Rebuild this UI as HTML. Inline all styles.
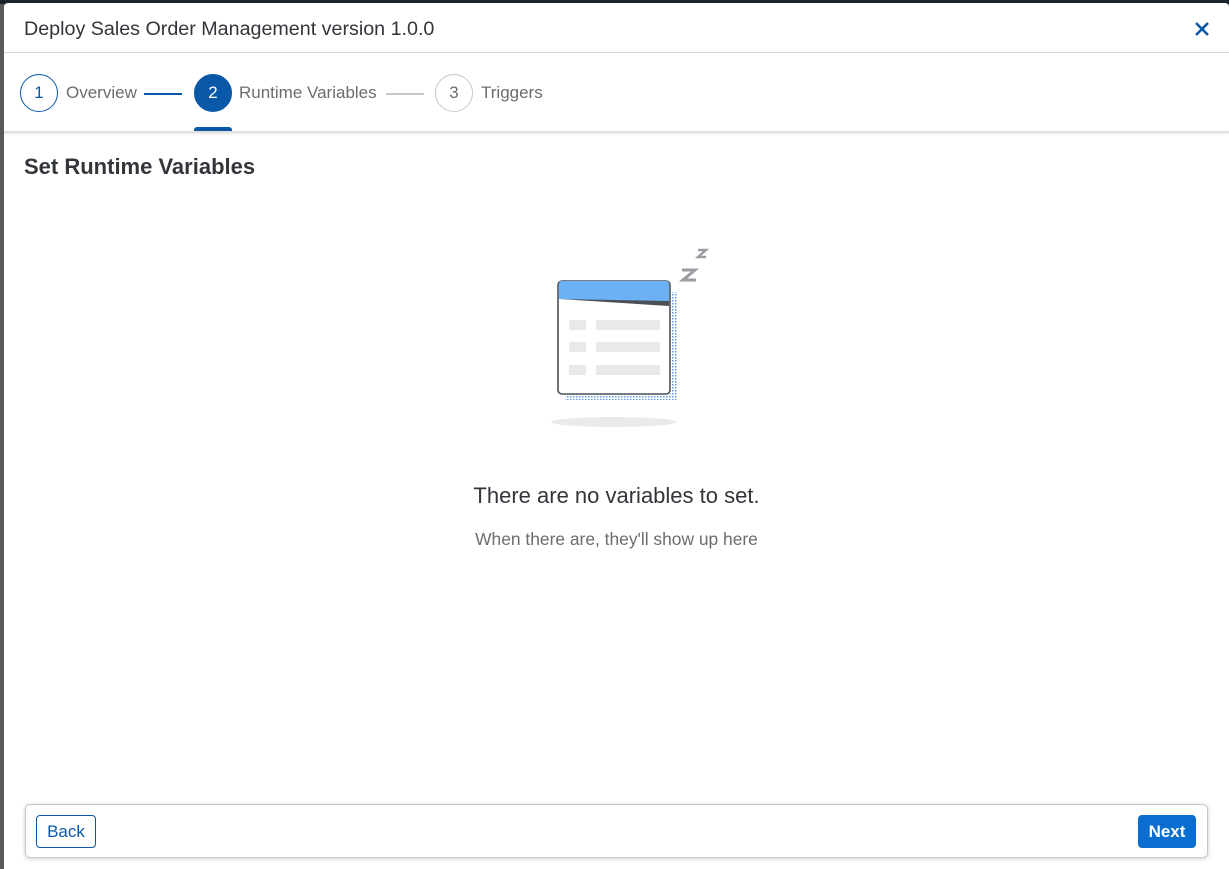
<!DOCTYPE html>
<html><head><meta charset="utf-8"><style>
*{margin:0;padding:0;box-sizing:border-box}
body{width:1229px;height:869px;overflow:hidden;background:#595959;font-family:"Liberation Sans",sans-serif;position:relative}
.topbar{position:absolute;left:0;top:0;width:1229px;height:4px;background:#1d232a}
.dlg{position:absolute;left:4px;top:3px;width:1225px;height:866px;background:#fff;border-radius:4px 4px 0 0}
.abs{position:absolute}
.t{color:#32363a}
.circ{position:absolute;width:38px;height:38px;border-radius:50%;text-align:center;line-height:36px;font-size:17px}
.lbl{position:absolute;font-size:17px;color:#6a6d70;top:83px}
</style></head><body>
<div class="topbar"></div>
<div class="dlg"></div>
<div class="abs t" style="left:24px;top:18px;font-size:19.7px;">Deploy Sales Order Management version 1.0.0</div>
<svg class="abs" style="left:1194px;top:21px" width="16" height="16" viewBox="0 0 16 16"><path d="M2 2L14 14M14 2L2 14" stroke="#0a58a8" stroke-width="2.6"/></svg>
<div class="abs" style="left:4px;top:52px;width:1225px;height:1px;background:#d9d9d9"></div>

<div class="circ" style="left:20px;top:74px;border:1.5px solid #0a58a8;color:#0a58a8">1</div>
<div class="lbl" style="left:66px">Overview</div>
<div class="abs" style="left:144px;top:93px;width:38px;height:2px;background:#0a58a8"></div>
<div class="circ" style="left:194px;top:74px;background:#0a58a8;color:#fff;border:1.5px solid #0a58a8">2</div>
<div class="lbl" style="left:239px">Runtime Variables</div>
<div class="abs" style="left:386px;top:93px;width:38px;height:2px;background:#c8c8c8"></div>
<div class="circ" style="left:435px;top:74px;border:1.5px solid #c8c8c8;color:#6a6d70">3</div>
<div class="lbl" style="left:481px">Triggers</div>
<div class="abs" style="left:194px;top:127px;width:38px;height:5px;background:#0a58a8;border-radius:3px 3px 0 0"></div>
<div class="abs" style="left:4px;top:131px;width:1225px;height:2px;background:#e0e0e0;box-shadow:0 1px 2px rgba(0,0,0,.1)"></div>

<div class="abs t" style="left:24px;top:154px;font-size:22px;font-weight:bold">Set Runtime Variables</div>

<svg class="abs" style="left:540px;top:240px" width="180" height="195" viewBox="0 0 180 195">
<defs><pattern id="d" width="3" height="3" patternUnits="userSpaceOnUse"><rect width="1.5" height="1.5" fill="#5b9be8"/></pattern></defs>
<rect x="130" y="52" width="8" height="108" fill="url(#d)"/>
<rect x="25" y="154" width="113" height="6" fill="url(#d)"/>
<rect x="18" y="41" width="112" height="113" rx="4" fill="#fff" stroke="#4a5056" stroke-width="1.6"/>
<path d="M19 43a3 3 0 0 1 3-2h104a3 3 0 0 1 3 3v18l-110-3z" fill="#6cb1f5"/>
<path d="M19 59l110 2v5l-110-7z" fill="#4a5056"/>
<rect x="29" y="80" width="17" height="10" rx="1" fill="#e8e9ea"/><rect x="56" y="80" width="64" height="10" rx="1" fill="#e8e9ea"/>
<rect x="29" y="102" width="17" height="10" rx="1" fill="#e8e9ea"/><rect x="56" y="102" width="64" height="10" rx="1" fill="#e8e9ea"/>
<rect x="29" y="125" width="17" height="10" rx="1" fill="#e8e9ea"/><rect x="56" y="125" width="64" height="10" rx="1" fill="#e8e9ea"/>
<path d="M142 30h13l-12 10h13" stroke="#9a9ea3" stroke-width="3" fill="none"/>
<path d="M158 10h8l-8 7h8" stroke="#9a9ea3" stroke-width="2.4" fill="none"/>
<ellipse cx="74" cy="182" rx="63" ry="5" fill="#e9eaeb"/>
</svg>

<div class="abs t" style="left:0;width:1229px;text-align:center;top:483px;font-size:22px;padding-left:4px">There are no variables to set.</div>
<div class="abs" style="left:0;width:1229px;text-align:center;top:529px;font-size:17.4px;color:#6a6d70;padding-left:4px">When there are, they'll show up here</div>

<div class="abs" style="left:25px;top:804px;width:1183px;height:54px;border:1px solid #c8c8c8;border-radius:5px;background:#fff;box-shadow:0 1px 4px rgba(0,0,0,.2)"></div>
<div class="abs" style="left:36px;top:815px;width:60px;height:33px;border:1px solid #0a58a8;border-radius:4px;color:#0a58a8;font-size:17px;text-align:center;line-height:31px">Back</div>
<div class="abs" style="left:1138px;top:815px;width:58px;height:33px;background:#0a6ed1;border-radius:4px;color:#fff;font-size:17px;font-weight:bold;text-align:center;line-height:33px">Next</div>
</body></html>
